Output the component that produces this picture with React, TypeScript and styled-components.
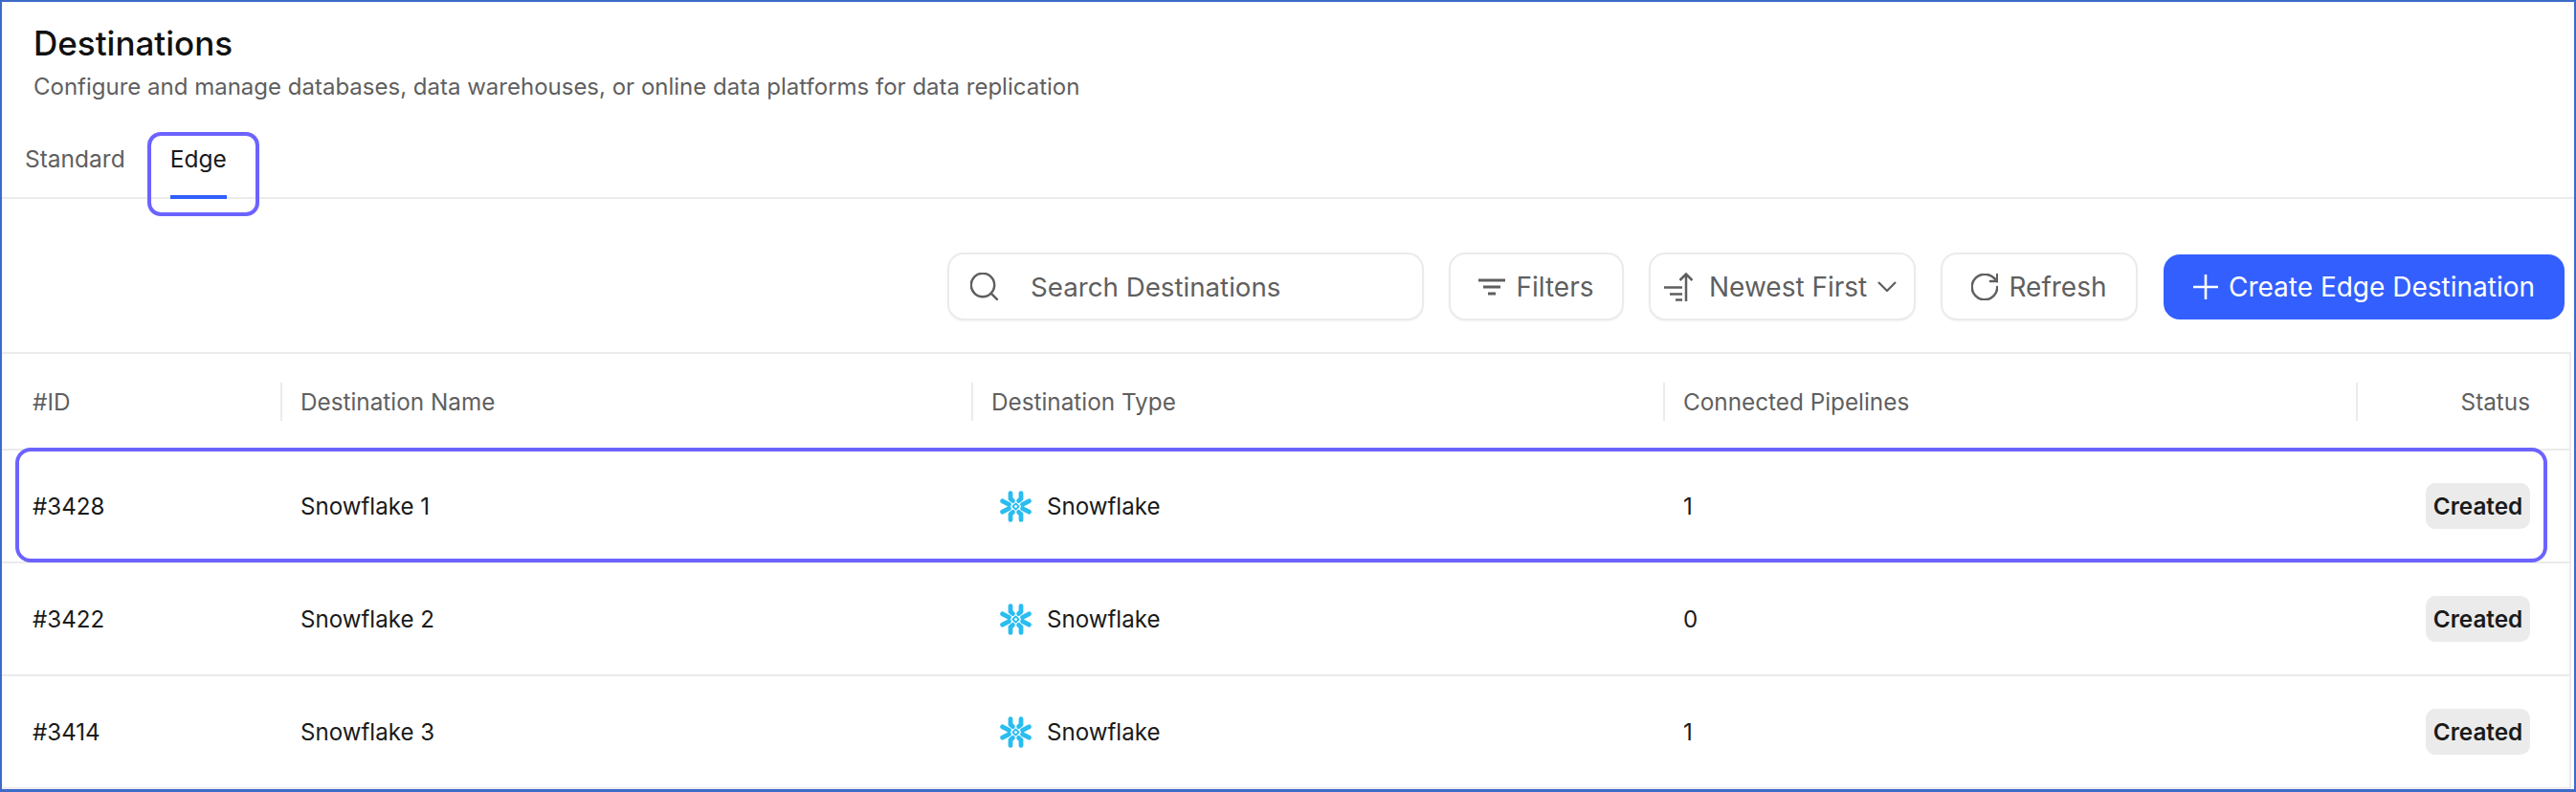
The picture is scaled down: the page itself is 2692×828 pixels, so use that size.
import React from "react";
import styled, { createGlobalStyle } from "styled-components";
import { RotateCw, Search } from "lucide-react";

const Global = createGlobalStyle`
  html, body { margin: 0; padding: 0; background: #fff; }
  body { font-family: Inter, "Liberation Sans", sans-serif; color: #1a1a1a; }
  * { box-sizing: border-box; }
`;

const Frame = styled.div`
  width: 2692px;
  height: 828px;
  border: solid #3d6bc9;
  border-width: 2px 2px 3px 2px;
  background: #fff;
  display: flex;
  flex-direction: column;
  overflow: hidden;
`;
const Header = styled.header`
  padding: 22px 33px 0;
`;
const Title = styled.h1`
  margin: 0;
  font-size: 35px;
  line-height: 42px;
  font-weight: 500;
  color: #111;
`;
const Subtitle = styled.p`
  margin: 10px 0 0;
  font-size: 24px;
  line-height: 30px;
  font-weight: 400;
  color: #5f5f5f;
`;
const TabBar = styled.nav`
  display: flex;
  gap: 47px;
  height: 75px;
  margin-top: 27px;
  padding: 0 0 0 24px;
  border-bottom: 2px solid #ebebeb;
`;
const Tab = styled.div<{ $active?: boolean }>`
  position: relative;
  height: 73px;
  padding-top: 18px;
  font-size: 24.5px;
  line-height: 30px;
  color: ${(p) => (p.$active ? "#1a1a1a" : "#5f5f5f")};
  ${(p) => (p.$active ? "border-bottom: 4px solid #335fff; height: 75px; margin-bottom: -2px;" : "")}
  ${(p) =>
    p.$active
      ? `&::after {
    content: "";
    position: absolute;
    left: -24px;
    right: -34px;
    top: 5px;
    bottom: -22px;
    border: 4px solid #6c63ff;
    border-radius: 14px;
    pointer-events: none;
  }`
      : ""}
`;
const Toolbar = styled.div`
  display: flex;
  justify-content: flex-end;
  align-items: center;
  gap: 26px;
  margin-top: 56px;
  padding-right: 10px;
  height: 71px;
`;
const Control = styled.div<{ $w: number }>`
  width: ${(p) => p.$w}px;
  height: 71px;
  display: flex;
  align-items: center;
  border: 2px solid #ebebeb;
  border-radius: 17px;
  background: #fff;
  box-shadow: 0 1px 2px rgba(0, 0, 0, 0.05);
  color: #5f5f5f;
  font-size: 28px;
  font-weight: 400;
  white-space: nowrap;
  svg { flex: none; }
`;
const SearchBox = styled(Control)`
  padding-left: 22px;
  gap: 34px;
  font-size: 27.7px;
`;
const TextButton = styled(Control)`
  justify-content: center;
  gap: 11px;
`;
const SortButton = styled(Control)`
  padding-left: 14px;
  gap: 17px;
`;
const SortCaret = styled.svg`
  margin-left: -6px;
`;
const PrimaryButton = styled(Control)`
  justify-content: center;
  gap: 11px;
  height: 68px;
  margin-left: 1px;
  background: #335fff;
  border-color: #335fff;
  color: #fff;
  box-shadow: none;
`;
const Table = styled.section`
  margin: 33px 3px 0 0;
  flex: 1;
  border: solid #ebebeb;
  border-width: 2px 2px 0 0;
  display: flex;
  flex-direction: column;
`;
const cols = "291px 722px 723px 724px 1fr";
const HeadRow = styled.div`
  display: grid;
  grid-template-columns: ${cols};
  align-items: center;
  height: 101px;
  border-bottom: 2px solid #ebebeb;
  font-size: 24.3px;
  color: #5f5f5f;
`;
const HeadCell = styled.div<{ $right?: boolean; $first?: boolean }>`
  height: 40px;
  line-height: 40px;
  padding-left: ${(p) => (p.$first ? "32px" : "19px")};
  padding-right: ${(p) => (p.$right ? "41px" : "0")};
  text-align: ${(p) => (p.$right ? "right" : "left")};
  border-left: ${(p) => (p.$first ? "none" : "2px solid #ebebeb")};
`;
const Row = styled.div<{ $focused?: boolean }>`
  position: relative;
  display: grid;
  grid-template-columns: ${cols};
  align-items: center;
  height: 118px;
  border-bottom: 2px solid #ebebeb;
  font-size: 24.1px;
  color: #1a1a1a;
  ${(p) =>
    p.$focused
      ? `&::after {
    content: "";
    position: absolute;
    left: 14px;
    right: 23px;
    top: -3px;
    bottom: -1px;
    border: 4px solid #6c63ff;
    border-radius: 16px;
    pointer-events: none;
  }`
      : ""}
`;
const Cell = styled.div<{ $first?: boolean }>`
  padding-left: ${(p) => (p.$first ? "32px" : "21px")};
`;
const TypeCell = styled(Cell)`
  display: flex;
  align-items: center;
  gap: 16px;
  padding-left: 30px;
`;
const StatusCell = styled.div`
  display: flex;
  justify-content: flex-end;
  padding-right: 41px;
`;
const Badge = styled.span`
  display: inline-flex;
  align-items: center;
  justify-content: center;
  width: 109px;
  height: 48px;
  border-radius: 10px;
  background: #ebebeb;
  color: #1a1a1a;
  font-weight: 600;
  font-size: 24.3px;
`;

const FilterIcon = () => (
  <svg width="28" height="18" viewBox="0 0 28 18" fill="none" stroke="#5f5f5f" strokeWidth="3">
    <path d="M0 2h28M5 9h18M10 16h8" />
  </svg>
);
const SortIcon = () => (
  <svg width="30" height="30" viewBox="0 0 30 30" fill="none" stroke="#5f5f5f" strokeWidth="2.5">
    <path d="M23 1v29M16.5 8 23 1.5 29.5 8" />
    <path d="M0 15.5h19M6 22.5h13M12 28.5h7" />
  </svg>
);
const PlusIcon = () => (
  <svg width="26" height="34" viewBox="0 0 26 34" fill="none" stroke="#fff" strokeWidth="2.6">
    <path d="M13 4v26M0 17h26" />
  </svg>
);
const SnowflakeLogo = () => (
  <svg width="33" height="33" viewBox="0 0 33 33" fill="none" stroke="#29bdf0" strokeWidth="4.8" strokeLinecap="round" strokeLinejoin="round">
    <path d="M2.6 10.8 9.4 14.4M2.6 22.2 9.4 18.6" />
    <path d="M30.4 10.8 23.6 14.4M30.4 22.2 23.6 18.6" />
    <path d="M11 2.6V8.4L13.4 10.6" />
    <path d="M22 2.6V8.4L19.6 10.6" />
    <path d="M11 30.4V24.6L13.4 22.4" />
    <path d="M22 30.4V24.6L19.6 22.4" />
    <path d="M16.5 13.4 19.6 16.5 16.5 19.6 13.4 16.5Z" strokeWidth="1.8" />
  </svg>
);

const data = [
  { id: "#3428", name: "Snowflake 1", n: 1, focused: true },
  { id: "#3422", name: "Snowflake 2", n: 0 },
  { id: "#3414", name: "Snowflake 3", n: 1 },
];

export default function App() {
  return (
    <Frame>
      <Global />
      <Header>
        <Title>Destinations</Title>
        <Subtitle>Configure and manage databases, data warehouses, or online data platforms for data replication</Subtitle>
      </Header>
      <TabBar>
        <Tab>Standard</Tab>
        <Tab $active>Edge</Tab>
      </TabBar>
      <Toolbar>
        <SearchBox $w={498}>
          <Search size={29} viewBox="2.5 2.5 19 19" strokeWidth={1.6} color="#5f5f5f" />
          Search Destinations
        </SearchBox>
        <TextButton $w={183}>
          <FilterIcon />
          Filters
        </TextButton>
        <SortButton $w={279}>
          <SortIcon />
          Newest First
          <SortCaret width="20" height="11" viewBox="0 0 20 11" fill="none" stroke="#5f5f5f" strokeWidth="2.2">
            <path d="M1 1l9 9 9-9" />
          </SortCaret>
        </SortButton>
        <TextButton $w={206}>
          <RotateCw size={28} viewBox="2.5 2.5 19 19" strokeWidth={1.7} color="#5f5f5f" />
          Refresh
        </TextButton>
        <PrimaryButton $w={419}>
          <PlusIcon />
          Create Edge Destination
        </PrimaryButton>
      </Toolbar>
      <Table>
        <HeadRow>
          <HeadCell $first>#ID</HeadCell>
          <HeadCell>Destination Name</HeadCell>
          <HeadCell>Destination Type</HeadCell>
          <HeadCell>Connected Pipelines</HeadCell>
          <HeadCell $right>Status</HeadCell>
        </HeadRow>
        {data.map((r) => (
          <Row key={r.id} $focused={r.focused}>
            <Cell $first>{r.id}</Cell>
            <Cell>{r.name}</Cell>
            <TypeCell>
              <SnowflakeLogo />
              Snowflake
            </TypeCell>
            <Cell>{r.n}</Cell>
            <StatusCell>
              <Badge>Created</Badge>
            </StatusCell>
          </Row>
        ))}
      </Table>
    </Frame>
  );
}
